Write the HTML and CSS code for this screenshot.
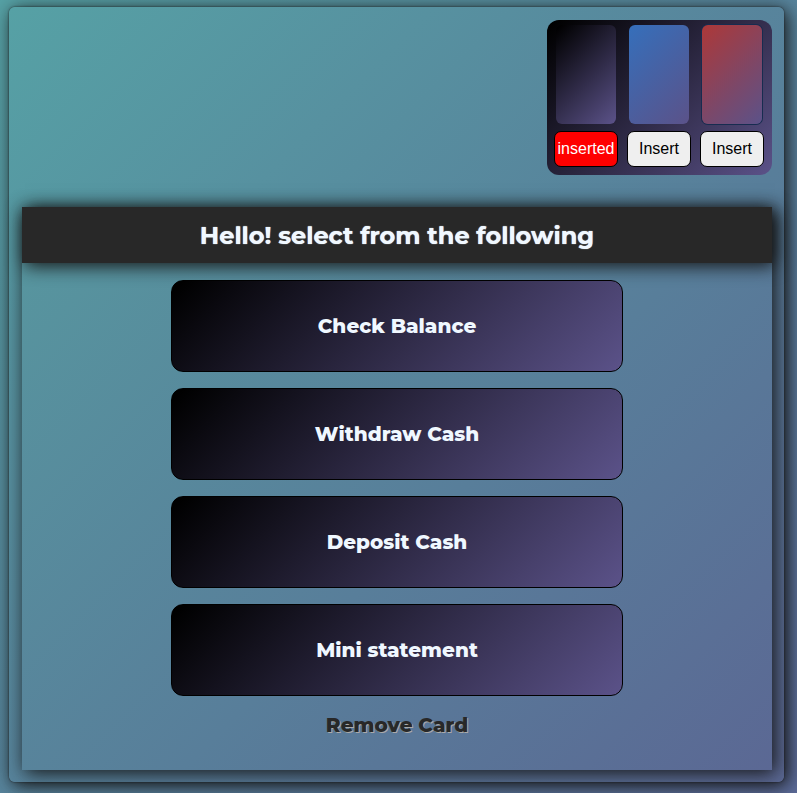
FILE: index.html
```html
<!DOCTYPE html>
<html lang="en">
<head>
<meta charset="utf-8">
<meta name="viewport" content="width=device-width, initial-scale=1">
<title>ATM</title>
<link rel="stylesheet" href="styles.css">
</head>
<body>
<main class="atm">
  <section class="wallet" aria-label="Cards">
    <div class="slot">
      <div class="card card-dark"></div>
      <button class="insert inserted" type="button">inserted</button>
    </div>
    <div class="slot">
      <div class="card card-blue"></div>
      <button class="insert" type="button">Insert</button>
    </div>
    <div class="slot">
      <div class="card card-red"></div>
      <button class="insert" type="button">Insert</button>
    </div>
  </section>
  <section class="screen">
    <h1 class="greeting">Hello! select from the following</h1>
    <div class="options">
      <button class="option" type="button">Check Balance</button>
      <button class="option" type="button">Withdraw Cash</button>
      <button class="option" type="button">Deposit Cash</button>
      <button class="option" type="button">Mini statement</button>
      <button class="remove" type="button">Remove Card</button>
    </div>
  </section>
</main>
</body>
</html>
```

FILE: styles.css
```css
* {
  box-sizing: border-box;
}

body {
  margin: 0;
  min-height: 100vh;
  padding: 7px 13px 11px 9px;
  display: flex;
  font-family: Montserrat, Inter, sans-serif;
  background: linear-gradient(135deg, #56a1a5, #587e9a 60%, #5b6a97);
}

.atm {
  flex: 1;
  display: flex;
  flex-direction: column;
  padding: 13px 12px 12px 13px;
  border-radius: 6px;
  background: linear-gradient(135deg, #56a1a5, #587e9a 60%, #5b6894);
  box-shadow: 3px 3px 18px #141414, 0 0 2px #222;
}

.wallet {
  align-self: flex-end;
  display: flex;
  gap: 9px;
  padding: 5px 8px 8px 7px;
  margin-bottom: 32px;
  border-radius: 12px;
  background: linear-gradient(135deg, #000 2%, #5b5289);
}

.slot {
  width: 64px;
  display: flex;
  flex-direction: column;
  align-items: center;
  gap: 7px;
}

.card {
  width: 60px;
  height: 99px;
  border-radius: 6px;
}

.card-dark {
  background: linear-gradient(135deg, #000 2%, #5b5289);
}

.card-blue {
  background: linear-gradient(135deg, #356fbb, #5b5289);
}

.card-red {
  background: linear-gradient(135deg, #ad3838, #5b5289);
  box-shadow: 0 0 0 1px #172c50;
}

.insert {
  width: 100%;
  height: 36px;
  padding: 0;
  border: 1px solid #000;
  border-radius: 7px;
  background: #efefef;
  color: #000;
  font: 16px "Liberation Sans", Arial, sans-serif;
}

.inserted {
  background: #f00;
  color: #fff;
}

.screen {
  flex: 1;
  box-shadow: 3px 3px 18px #141414;
  background: linear-gradient(135deg, #57979f, #587e9a 55%, #5b6894);
}

.greeting {
  margin: 0;
  padding: 15px 0 13px;
  line-height: 28px;
  text-align: center;
  font-size: 24px;
  font-weight: 700;
  color: #f0f8ff;
  text-shadow: 0 0 1px #f0f8ff;
  background: #282828;
  box-shadow: 3px 3px 18px #141414;
}

.options {
  width: calc(60% + 2px);
  min-width: 260px;
  margin: 0 auto;
  padding: 17px 0;
  display: flex;
  flex-direction: column;
  align-items: center;
  gap: 16px;
}

.option {
  width: 100%;
  height: 92px;
  border: 1px solid #000;
  border-radius: 12px;
  background: linear-gradient(135deg, #000 2%, #5b5289);
  color: #f0f8ff;
  font: inherit;
  font-size: 20px;
  font-weight: 800;
}

.remove {
  padding: 0;
  border: 0;
  background: none;
  color: #282828;
  font: inherit;
  font-size: 20px;
  line-height: 26px;
  font-weight: 800;
  text-shadow: 1px 1px 0 #aaa;
}
```
